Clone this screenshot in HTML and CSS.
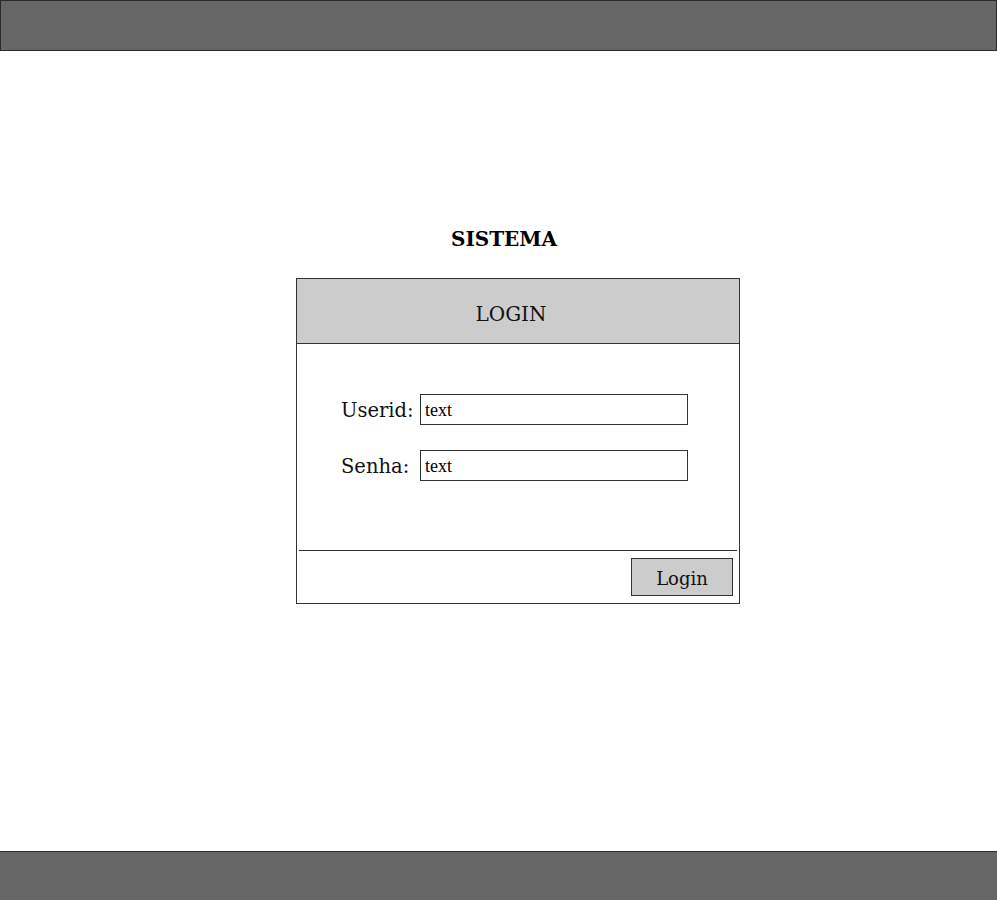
FILE: index.html
```html
<!DOCTYPE html>
<html lang="pt">
<head>
<meta charset="utf-8">
<title>Sistema</title>
<link rel="stylesheet" href="styles.css">
</head>
<body>
<div class="page">
  <header class="topbar"></header>
  <main class="main">
    <h1 class="title">SISTEMA</h1>
    <section class="card">
      <div class="card-head">LOGIN</div>
      <div class="card-body">
        <label class="label" for="userid">Userid:</label>
        <input class="field" id="userid" type="text" value="text">
        <label class="label" for="senha">Senha:</label>
        <input class="field" id="senha" type="text" value="text">
      </div>
      <div class="card-foot">
        <button class="btn" type="button">Login</button>
      </div>
    </section>
  </main>
  <footer class="bottombar"></footer>
</div>
</body>
</html>
```

FILE: styles.css
```css
html, body {
  margin: 0;
  padding: 0;
  background: #ffffff;
}
body {
  font-family: "DejaVu Serif", "Liberation Serif", serif;
  color: #111111;
}
.page {
  display: flex;
  flex-direction: column;
  width: 997px;
  height: 900px;
}
.topbar {
  box-sizing: border-box;
  height: 51px;
  background: #666666;
  border: 1px solid #2a2a2a;
}
.bottombar {
  box-sizing: border-box;
  height: 49px;
  background: #666666;
  border-top: 1px solid #2a2a2a;
}
.main {
  flex: 1;
  display: flex;
  flex-direction: column;
  align-items: center;
  padding-top: 173px;
  box-sizing: border-box;
}
.title {
  margin: 0 0 0 11px;
  font-size: 20px;
  line-height: 30px;
  font-weight: bold;
  color: #000;
}
.card {
  box-sizing: border-box;
  width: 444px;
  margin: 24px 0 0 39px;
  border: 1px solid #333333;
  display: flex;
  flex-direction: column;
}
.card-head {
  box-sizing: border-box;
  height: 65px;
  padding: 6px 14px 0 0;
  background: #cccccc;
  border-bottom: 1px solid #333333;
  display: flex;
  align-items: center;
  justify-content: center;
  font-size: 20px;
  color: #111;
}
.card-body {
  display: grid;
  grid-template-columns: 79px 268px;
  row-gap: 25px;
  align-items: center;
  padding: 50px 0 69px 44px;
}
.label {
  font-size: 19.5px;
  line-height: 24px;
  color: #111;
  padding-top: 2px;
}
.field {
  box-sizing: border-box;
  width: 268px;
  height: 31px;
  margin: 0;
  padding: 2px 4px 0;
  border: 1px solid #333333;
  border-radius: 0;
  background: #fff;
  font-family: "Liberation Serif", "DejaVu Serif", serif;
  font-size: 18px;
  color: #000;
  outline: none;
}
.card-foot {
  margin: 0 2px;
  border-top: 1px solid #333333;
  display: flex;
  justify-content: flex-end;
  padding: 7px 4px 7px;
}
.btn {
  box-sizing: border-box;
  width: 102px;
  height: 38px;
  margin: 0;
  padding: 2px 0 0;
  background: #cccccc;
  border: 1px solid #333333;
  border-radius: 0;
  font-family: "DejaVu Serif", "Liberation Serif", serif;
  font-size: 18px;
  color: #111;
}
```
